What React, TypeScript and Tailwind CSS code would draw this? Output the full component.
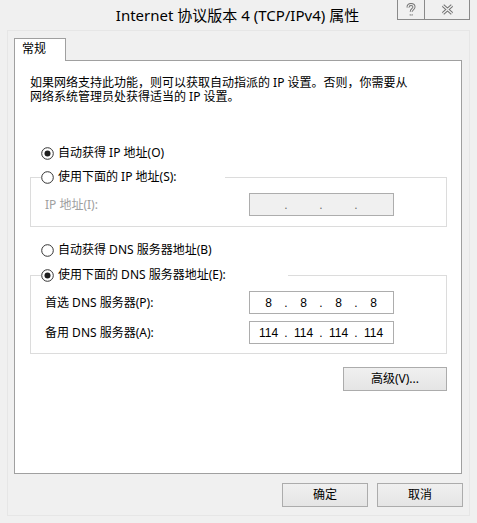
import { Fragment, type ReactNode } from "react";

const Radio = ({ checked }: { checked?: boolean }) => (
  <svg width="13" height="13" viewBox="0 0 13 13" className="shrink-0">
    <circle cx="6.5" cy="6.5" r="5.8" fill="#fff" stroke="#333" strokeWidth="1" />
    {checked && <circle cx="6.5" cy="6.5" r="3" fill="#1e1e1e" />}
  </svg>
);

const RadioRow = ({ checked, label }: { checked?: boolean; label: string }) => (
  <div className="flex h-[16px] items-center">
    <Radio checked={checked} />
    <span className="ml-[4px] whitespace-nowrap">{label}</span>
  </div>
);

const IpBox = ({ parts, disabled }: { parts: string[]; disabled?: boolean }) => (
  <div
    className={`flex h-[23px] w-[145px] items-center border border-[#adadad] pl-[4px] font-['Liberation_Sans',sans-serif] text-[12px] ${
      disabled ? "bg-[#f0f0f0] text-[#6d6d6d]" : "bg-white text-black"
    }`}
  >
    {parts.map((p, i) => (
      <Fragment key={i}>
        {i > 0 && <span className="w-[6px] text-center">.</span>}
        <span className="w-[29px] text-center">{p}</span>
      </Fragment>
    ))}
  </div>
);

const Btn = ({ children, className }: { children: ReactNode; className?: string }) => (
  <button
    className={`h-[24px] border border-[#acacac] bg-linear-to-b from-[#f0f0f0] to-[#e5e5e5] text-[12px] text-black ${className ?? ""}`}
  >
    {children}
  </button>
);

export default function App() {
  return (
    <div className="flex h-[523px] w-[477px] flex-col bg-[#f0f0f0] font-['Noto_Sans','Noto_Sans_CJK_SC',sans-serif] text-[12px] text-black">
      {/* title bar */}
      <div className="flex h-[30px] shrink-0">
        <div className="flex flex-1 items-center justify-center pl-[78px] text-[15px]">
          Internet 协议版本 4 (TCP/IPv4) 属性
        </div>
        <div className="mr-[7px] flex self-start">
          <div className="flex h-[20px] w-[27px] items-center justify-center border-b border-l border-[#8a8a8a]">
            <svg width="10" height="14" viewBox="0 0 10 14">
              <path d="M2 4.5C2 2.5 3.3 1.5 5 1.5S8 2.5 8 4C8 6 5.2 6.3 5.2 8.8M5.2 11.2V12.4" fill="none" stroke="#707070" strokeWidth="3" />
              <path d="M2 4.5C2 2.5 3.3 1.5 5 1.5S8 2.5 8 4C8 6 5.2 6.3 5.2 8.8M5.2 11.2V12.4" fill="none" stroke="#f0f0f0" strokeWidth="1.2" />
            </svg>
          </div>
          <div className="flex h-[20px] w-[46px] items-center justify-center border-x border-b border-[#8a8a8a]">
            <svg width="13" height="11" viewBox="0 0 13 11">
              <path d="M2 1.5L11 9.5M11 1.5L2 9.5" fill="none" stroke="#707070" strokeWidth="3.2" />
              <path d="M2 1.5L11 9.5M11 1.5L2 9.5" fill="none" stroke="#f0f0f0" strokeWidth="1.3" />
            </svg>
          </div>
        </div>
      </div>

      {/* client frame */}
      <div className="mx-[7px] mb-[7px] flex flex-1 flex-col border border-[#e6e6e6] pl-[6px] pt-[7px]">
        <div className="relative z-10 -mb-px h-[23px] w-[52px] border-x border-t border-[#a0a0a0] bg-white pl-[7px] pt-[1px] leading-[18px]">
          常规
        </div>
        <div className="flex h-[414px] w-[448px] flex-col border border-[#a0a0a0] bg-white">
          <p className="ml-[15px] mt-[15px] whitespace-nowrap leading-[14px]">
            如果网络支持此功能，则可以获取自动指派的 IP 设置。否则，你需要从
            <br />
            网络系统管理员处获得适当的 IP 设置。
          </p>

          <div className="ml-[26px] mt-[41px]">
            <RadioRow checked label="自动获得 IP 地址(O)" />
          </div>

          <fieldset className="ml-[15px] mt-[8px] w-[417px] border border-[#dcdcdc] pb-[10px]">
            <legend className="ml-[10px] w-[184px]">
              <RadioRow label="使用下面的 IP 地址(S):" />
            </legend>
            <div className="mt-[8px] flex items-center">
              <span className="w-[218px] pl-[14px] text-[#a0a0a0]">IP 地址(I):</span>
              <IpBox disabled parts={["", "", "", ""]} />
            </div>
          </fieldset>

          <div className="ml-[26px] mt-[15px]">
            <RadioRow label="自动获得 DNS 服务器地址(B)" />
          </div>

          <fieldset className="ml-[15px] mt-[9px] w-[417px] border border-[#dcdcdc] pb-[9px]">
            <legend className="ml-[10px] w-[247px]">
              <RadioRow checked label="使用下面的 DNS 服务器地址(E):" />
            </legend>
            <div className="mt-[8px] flex items-center">
              <span className="w-[218px] pl-[14px]">首选 DNS 服务器(P):</span>
              <IpBox parts={["8", "8", "8", "8"]} />
            </div>
            <div className="mt-[7px] flex items-center">
              <span className="w-[218px] pl-[14px]">备用 DNS 服务器(A):</span>
              <IpBox parts={["114", "114", "114", "114"]} />
            </div>
          </fieldset>

          <Btn className="mr-[14px] mt-[13px] w-[104px] self-end">高级(V)...</Btn>
        </div>

        <div className="ml-[268px] mt-[9px] flex gap-[9px]">
          <Btn className="w-[86px]">确定</Btn>
          <Btn className="w-[86px]">取消</Btn>
        </div>
      </div>
    </div>
  );
}
